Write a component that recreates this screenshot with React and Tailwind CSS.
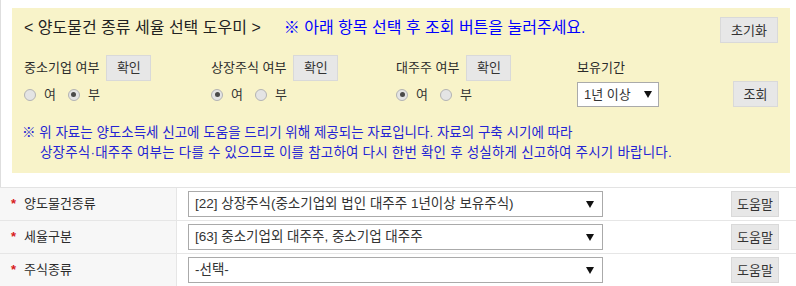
import React from "react";

function Btn({ children, className = "" }) {
  return (
    <button
      className={`h-[26px] bg-[#e7e7e7] border border-[#d9d9d9] text-[13px] leading-none text-[#333] ${className}`}
    >
      {children}
    </button>
  );
}

function Radio({ checked, label }) {
  return (
    <span className="flex items-center">
      <span className="w-[12px] h-[12px] rounded-full border border-[#b3b3b3] bg-[#e4e4e4] flex items-center justify-center">
        {checked && <span className="w-[5px] h-[5px] rounded-full bg-[#4a4a4a]" />}
      </span>
      <span className="ml-[8px] text-[13px] text-[#333]">{label}</span>
    </span>
  );
}

function Arrow() {
  return (
    <svg width="8" height="7" viewBox="0 0 8 7">
      <path d="M0 0 L8 0 L4 7 Z" fill="#111" />
    </svg>
  );
}

function Check({ title, width, yes }) {
  return (
    <div className={`${width} flex flex-col gap-[2px]`}>
      <div className="flex items-center h-[25px]">
        <span className="text-[13px] text-[#2b2b2b]">{title}</span>
        <Btn className="ml-[7px] w-[45px]">확인</Btn>
      </div>
      <div className="flex items-center h-[25px] gap-[12px]">
        <Radio checked={yes} label="여" />
        <Radio checked={!yes} label="부" />
      </div>
    </div>
  );
}

const rows = [
  { label: "양도물건종류", value: "[22] 상장주식(중소기업외 법인 대주주 1년이상 보유주식)" },
  { label: "세율구분", value: "[63] 중소기업외 대주주, 중소기업 대주주" },
  { label: "주식종류", value: "-선택-" },
];

export default function App() {
  return (
    <div className="w-[796px] h-[286px] overflow-hidden bg-white font-['Liberation_Sans','Noto_Sans_CJK_KR',sans-serif]">
      <div className="border-l border-[#dedede] pl-[11px] pr-[6px] pt-[8px] pb-[14px]">
        <div className="bg-[#f8f3c9] pl-[12px] pr-[12px] pt-[9px] pb-[10px]">
          <div className="flex items-start">
            <span className="text-[16px] leading-[22px] text-[#222]">
              &lt; 양도물건 종류 세율 선택 도우미 &gt;
            </span>
            <span className="ml-[23px] text-[16px] leading-[22px] text-[#0000ff]">
              ※ 아래 항목 선택 후 조회 버튼을 눌러주세요.
            </span>
            <Btn className="ml-auto w-[58px]">초기화</Btn>
          </div>

          <div className="flex mt-[12px]">
            <Check title="중소기업 여부" width="w-[187px]" yes={false} />
            <Check title="상장주식 여부" width="w-[185px]" yes={true} />
            <Check title="대주주 여부" width="w-[181px]" yes={true} />
            <div className="flex flex-col gap-[2px]">
              <div className="flex items-center h-[25px] text-[13px] text-[#2b2b2b]">보유기간</div>
              <div className="flex items-center h-[25px] w-[82px] border border-[#aaa] bg-white px-[6px] justify-between">
                <span className="text-[13px] text-[#333]">1년 이상</span>
                <Arrow />
              </div>
            </div>
            <div className="ml-auto flex flex-col justify-end">
              <Btn className="w-[45px]">조회</Btn>
            </div>
          </div>

          <div className="mt-[16px] text-[13.5px] leading-[20px] text-[#2424d4]">
            <div className="-ml-[2px]">
              ※ 위 자료는 양도소득세 신고에 도움을 드리기 위해 제공되는 자료입니다. 자료의 구축 시기에 따라
            </div>
            <div className="pl-[16px] tracking-[0.2px]">
              상장주식·대주주 여부는 다를 수 있으므로 이를 참고하여 다시 한번 확인 후 성실하게 신고하여 주시기 바랍니다.
            </div>
          </div>
        </div>
      </div>

      <div className="border-t border-[#e3e3e3]">
        {rows.map((r) => (
          <div key={r.label} className="flex h-[33px] border-b border-[#e6e6e6]">
            <div className="w-[177px] bg-[#f7f7f7] border-r border-[#e6e6e6] flex items-center pl-[11px]">
              <span className="text-[13px] font-bold text-[#d81b1b] w-[13px]">*</span>
              <span className="text-[13px] text-[#2b2b2b]">{r.label}</span>
            </div>
            <div className="flex items-center pl-[11px]">
              <div className="w-[415px] h-[26px] border border-[#aaa] bg-white flex items-center justify-between pl-[6px] pr-[8px]">
                <span className="text-[13.5px] text-[#333]">{r.value}</span>
                <Arrow />
              </div>
            </div>
            <div className="flex items-center ml-[128px]">
              <Btn className="w-[48px]">도움말</Btn>
            </div>
          </div>
        ))}
      </div>
    </div>
  );
}
